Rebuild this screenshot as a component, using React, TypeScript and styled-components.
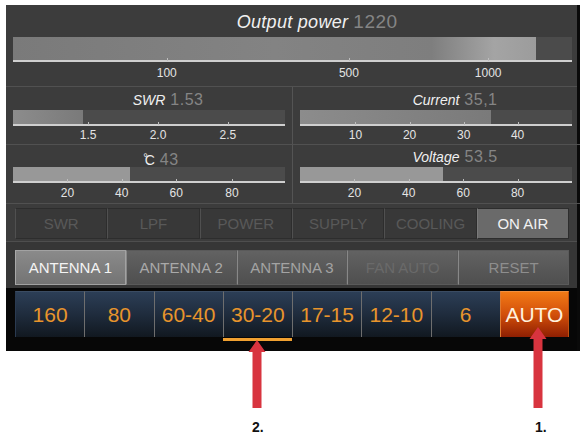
import React from "react";
import styled, { createGlobalStyle } from "styled-components";

const Global = createGlobalStyle`
  html, body { margin: 0; padding: 0; background: #ffffff; }
  body { font-family: "Liberation Sans", Arial, sans-serif; }
  * { box-sizing: border-box; }
`;

const Page = styled.div`
  position: relative;
  width: 580px;
  height: 434px;
  padding: 5px 0 0 6px;
`;

const Panel = styled.div`
  width: 574px;
  border-right: 3px solid #0a0a0a;
  background: #3c3c3c;
  display: flex;
  flex-direction: column;
`;

const PowerSection = styled.section`
  height: 82px;
  padding: 7px 5px 0 7px;
  display: flex;
  flex-direction: column;
  border-bottom: 1px solid #515151;
`;

const Title = styled.div<{ $big?: boolean }>`
  display: grid;
  grid-template-columns: 1fr auto 1fr;
  align-items: baseline;
  height: ${(p) => (p.$big ? 20 : 16)}px;
  line-height: ${(p) => (p.$big ? 20 : 16)}px;
  font-size: ${(p) => (p.$big ? 18 : 14)}px;
  letter-spacing: ${(p) => (p.$big ? 0.3 : 0)}px;
`;

const TitleLabel = styled.span<{ $upright?: boolean }>`
  grid-column: 2;
  font-style: ${(p) => (p.$upright ? "normal" : "italic")};
  color: #f0f0f0;
`;

const Degree = styled.span`
  display: inline-block;
  margin-right: -3px;
  font-size: 11px;
  vertical-align: 4px;
`;

const TitleValue = styled.span<{ $big?: boolean }>`
  grid-column: 3;
  justify-self: start;
  margin-left: 5px;
  color: #858585;
  font-size: ${(p) => (p.$big ? 19 : 16)}px;
  letter-spacing: 0.5px;
`;

const Track = styled.div<{ $h: number; $gap: number }>`
  position: relative;
  height: ${(p) => p.$h}px;
  margin-top: ${(p) => p.$gap}px;
  background: #4b4b4b;
  border-bottom: 2px solid #cfcfcf;
  display: flex;
`;

const Fill = styled.div<{ $kind: "power" | "grad" | "flat" }>`
  height: 100%;
  background: ${(p) =>
    p.$kind === "power"
      ? "linear-gradient(90deg, #7a7a7a 0%, #838383 50%, #7e7e7e 80%, #a4a4a4 92%, #9c9c9c 100%)"
      : p.$kind === "grad"
      ? "linear-gradient(90deg, #8c8c8c 0%, #7a7a7a 100%)"
      : "#989898"};
`;

const Scale = styled.div<{ $h: number }>`
  position: relative;
  height: ${(p) => p.$h}px;
`;

const TickLabel = styled.span<{ $top: number }>`
  position: absolute;
  top: ${(p) => p.$top}px;
  transform: translateX(-50%);
  font-size: 12px;
  line-height: 14px;
  color: #e4e4e4;
  white-space: nowrap;
`;

const TickMark = styled.span`
  position: absolute;
  top: -4px;
  width: 1px;
  height: 3px;
  background: #bdbdbd;
`;

const MeterGrid = styled.div`
  display: grid;
  grid-template-columns: 287px 287px;
`;

const Meter = styled.div<{ $left?: boolean; $row: number }>`
  height: ${(p) => (p.$row === 1 ? 58 : 59)}px;
  padding: ${(p) => (p.$row === 1 ? 5 : 4)}px ${(p) => (p.$left ? 7 : 8)}px 0 7px;
  border-right: ${(p) => (p.$left ? "1px solid #545454" : "none")};
  border-bottom: 1px solid #515151;
  display: flex;
  flex-direction: column;
`;

const StatusRow = styled.div`
  display: grid;
  grid-template-columns: repeat(6, 1fr);
  padding: 4px 8px 2px 9px;
  border-bottom: 1px solid #4e4e4e;
`;

const StatusButton = styled.div<{ $on?: boolean }>`
  height: 31px;
  display: flex;
  align-items: center;
  justify-content: center;
  font-size: 15px;
  color: ${(p) => (p.$on ? "#f2f2f2" : "#595959")};
  background: ${(p) => (p.$on ? "#6a6a6a" : "#383838")};
  border: 1px solid #2d2d2d;
  border-left: 1px solid ${(p) => (p.$on ? "#7a7a7a" : "#505050")};
`;

const AntennaRow = styled.div`
  display: grid;
  grid-template-columns: repeat(5, 1fr);
  padding: 8px 8px 3px 9px;
  background: #363636;
`;

const AntennaButton = styled.div<{ $active?: boolean; $tone: string }>`
  height: 35px;
  display: flex;
  align-items: center;
  justify-content: center;
  font-size: 15px;
  color: ${(p) => p.$tone};
  background: ${(p) =>
    p.$active
      ? "linear-gradient(180deg, #8a8a8a 0%, #747474 100%)"
      : "linear-gradient(180deg, #626262 0%, #4f4f4f 100%)"};
  border: 1px solid ${(p) => (p.$active ? "#a2a2a2" : "#5a5a5a")};
  border-left: 1px solid ${(p) => (p.$active ? "#a8a8a8" : "#888888")};
`;

const BandArea = styled.div`
  background: #070707;
  padding: 3px 8px 10px 9px;
`;

const BandRow = styled.div`
  display: grid;
  grid-template-columns: repeat(8, 1fr);
`;

const BandCell = styled.div`
  display: flex;
  flex-direction: column;
`;

const BandButton = styled.div<{ $auto?: boolean; $first?: boolean }>`
  height: 46px;
  display: flex;
  align-items: center;
  justify-content: center;
  font-size: 21px;
  color: ${(p) => (p.$auto ? "#fff1de" : "#e8952c")};
  background: ${(p) =>
    p.$auto
      ? "linear-gradient(180deg, #f27a16 0%, #d24f0a 50%, #8e1f02 100%)"
      : "linear-gradient(180deg, #2c3e56 0%, #1f2c3d 50%, #111820 100%)"};
  border-top: 1px solid ${(p) => (p.$auto ? "#f09040" : "#3b4c62")};
  border-left: 1px solid ${(p) => (p.$auto ? "#e07a30" : p.$first ? "#2a3a50" : "#6e6e6e")};
  border-right: ${(p) => (p.$auto ? "1px solid #c05010" : "none")};
`;

const Underline = styled.div<{ $on?: boolean }>`
  height: 3px;
  margin-top: 1px;
  background: ${(p) => (p.$on ? "#f0a030" : "transparent")};
`;

const Overlay = styled.svg`
  position: absolute;
  left: 0;
  top: 0;
  pointer-events: none;
`;

const Note = styled.span<{ $x: number }>`
  position: absolute;
  top: 419px;
  left: ${(p) => p.$x}px;
  font-size: 14px;
  font-weight: bold;
  color: #111;
  line-height: 16px;
`;

type Tick = { label: string; pos: number };

function Bar({
  value,
  ticks,
  h,
  gap,
  scaleH,
  labelTop,
  kind,
}: {
  value: number;
  ticks: Tick[];
  h: number;
  gap: number;
  scaleH: number;
  labelTop: number;
  kind: "power" | "grad" | "flat";
}) {
  return (
    <>
      <Track $h={h} $gap={gap}>
        <Fill $kind={kind} style={{ width: `${value}%` }} />
      </Track>
      <Scale $h={scaleH}>
        {ticks.map((t) => (
          <React.Fragment key={t.label}>
            <TickMark style={{ left: `${t.pos}%` }} />
            <TickLabel $top={labelTop} style={{ left: `${t.pos}%` }}>
              {t.label}
            </TickLabel>
          </React.Fragment>
        ))}
      </Scale>
    </>
  );
}

function arrow(cx: number, ty: number, by: number) {
  return `${cx},${ty} ${cx + 8.5},${ty + 12} ${cx + 4.5},${ty + 12} ${cx + 4.5},${by} ${cx - 4.5},${by} ${cx - 4.5},${ty + 12} ${cx - 8.5},${ty + 12}`;
}

const statuses = ["SWR", "LPF", "POWER", "SUPPLY", "COOLING", "ON AIR"];
const antennas = [
  { label: "ANTENNA 1", tone: "#f4f4f4", active: true },
  { label: "ANTENNA 2", tone: "#a9a9a9" },
  { label: "ANTENNA 3", tone: "#a3a3a3" },
  { label: "FAN AUTO", tone: "#6a6a6a" },
  { label: "RESET", tone: "#8e8e8e" },
];
const bands = ["160", "80", "60-40", "30-20", "17-15", "12-10", "6", "AUTO"];

export default function App() {
  return (
    <Page>
      <Global />
      <Panel>
        <PowerSection>
          <Title $big>
            <TitleLabel>Output power</TitleLabel>
            <TitleValue $big>1220</TitleValue>
          </Title>
          <Bar
            value={93.6}
            h={25}
            gap={5}
            scaleH={23}
            labelTop={4}
            kind="power"
            ticks={[
              { label: "100", pos: 27.5 },
              { label: "500", pos: 60.1 },
              { label: "1000", pos: 85 },
            ]}
          />
        </PowerSection>
        <MeterGrid>
          <Meter $left $row={1}>
            <Title>
              <TitleLabel>SWR</TitleLabel>
              <TitleValue>1.53</TitleValue>
            </Title>
            <Bar
              value={25.7}
              h={16}
              gap={2}
              scaleH={18}
              labelTop={2}
              kind="grad"
              ticks={[
                { label: "1.5", pos: 27.6 },
                { label: "2.0", pos: 53.3 },
                { label: "2.5", pos: 79 },
              ]}
            />
          </Meter>
          <Meter $row={1}>
            <Title>
              <TitleLabel>Current</TitleLabel>
              <TitleValue>35,1</TitleValue>
            </Title>
            <Bar
              value={70.2}
              h={16}
              gap={2}
              scaleH={18}
              labelTop={2}
              kind="grad"
              ticks={[
                { label: "10", pos: 20.4 },
                { label: "20", pos: 40.3 },
                { label: "30", pos: 60.2 },
                { label: "40", pos: 80 },
              ]}
            />
          </Meter>
          <Meter $left $row={2}>
            <Title>
              <TitleLabel $upright>
                <Degree>°</Degree>C
              </TitleLabel>
              <TitleValue>43</TitleValue>
            </Title>
            <Bar
              value={43}
              h={16}
              gap={2}
              scaleH={20}
              labelTop={3}
              kind="flat"
              ticks={[
                { label: "20", pos: 20 },
                { label: "40", pos: 40 },
                { label: "60", pos: 60 },
                { label: "80", pos: 80.5 },
              ]}
            />
          </Meter>
          <Meter $row={2}>
            <Title>
              <TitleLabel>Voltage</TitleLabel>
              <TitleValue>53.5</TitleValue>
            </Title>
            <Bar
              value={52.6}
              h={16}
              gap={2}
              scaleH={20}
              labelTop={3}
              kind="flat"
              ticks={[
                { label: "20", pos: 20 },
                { label: "40", pos: 40 },
                { label: "60", pos: 60 },
                { label: "80", pos: 80 },
              ]}
            />
          </Meter>
        </MeterGrid>
        <StatusRow>
          {statuses.map((s) => (
            <StatusButton key={s} $on={s === "ON AIR"}>
              {s}
            </StatusButton>
          ))}
        </StatusRow>
        <AntennaRow>
          {antennas.map((a) => (
            <AntennaButton key={a.label} $active={a.active} $tone={a.tone}>
              {a.label}
            </AntennaButton>
          ))}
        </AntennaRow>
        <BandArea>
          <BandRow>
            {bands.map((b, i) => (
              <BandCell key={b}>
                <BandButton $auto={b === "AUTO"} $first={i === 0}>
                  {b}
                </BandButton>
                <Underline $on={b === "30-20"} />
              </BandCell>
            ))}
          </BandRow>
        </BandArea>
      </Panel>
      <Overlay width="580" height="434" viewBox="0 0 580 434">
        <polygon points={arrow(257, 340, 408)} fill="#d8343f" />
        <polygon points={arrow(538, 327, 408)} fill="#d8343f" />
      </Overlay>
      <Note $x={252}>2.</Note>
      <Note $x={535}>1.</Note>
    </Page>
  );
}
